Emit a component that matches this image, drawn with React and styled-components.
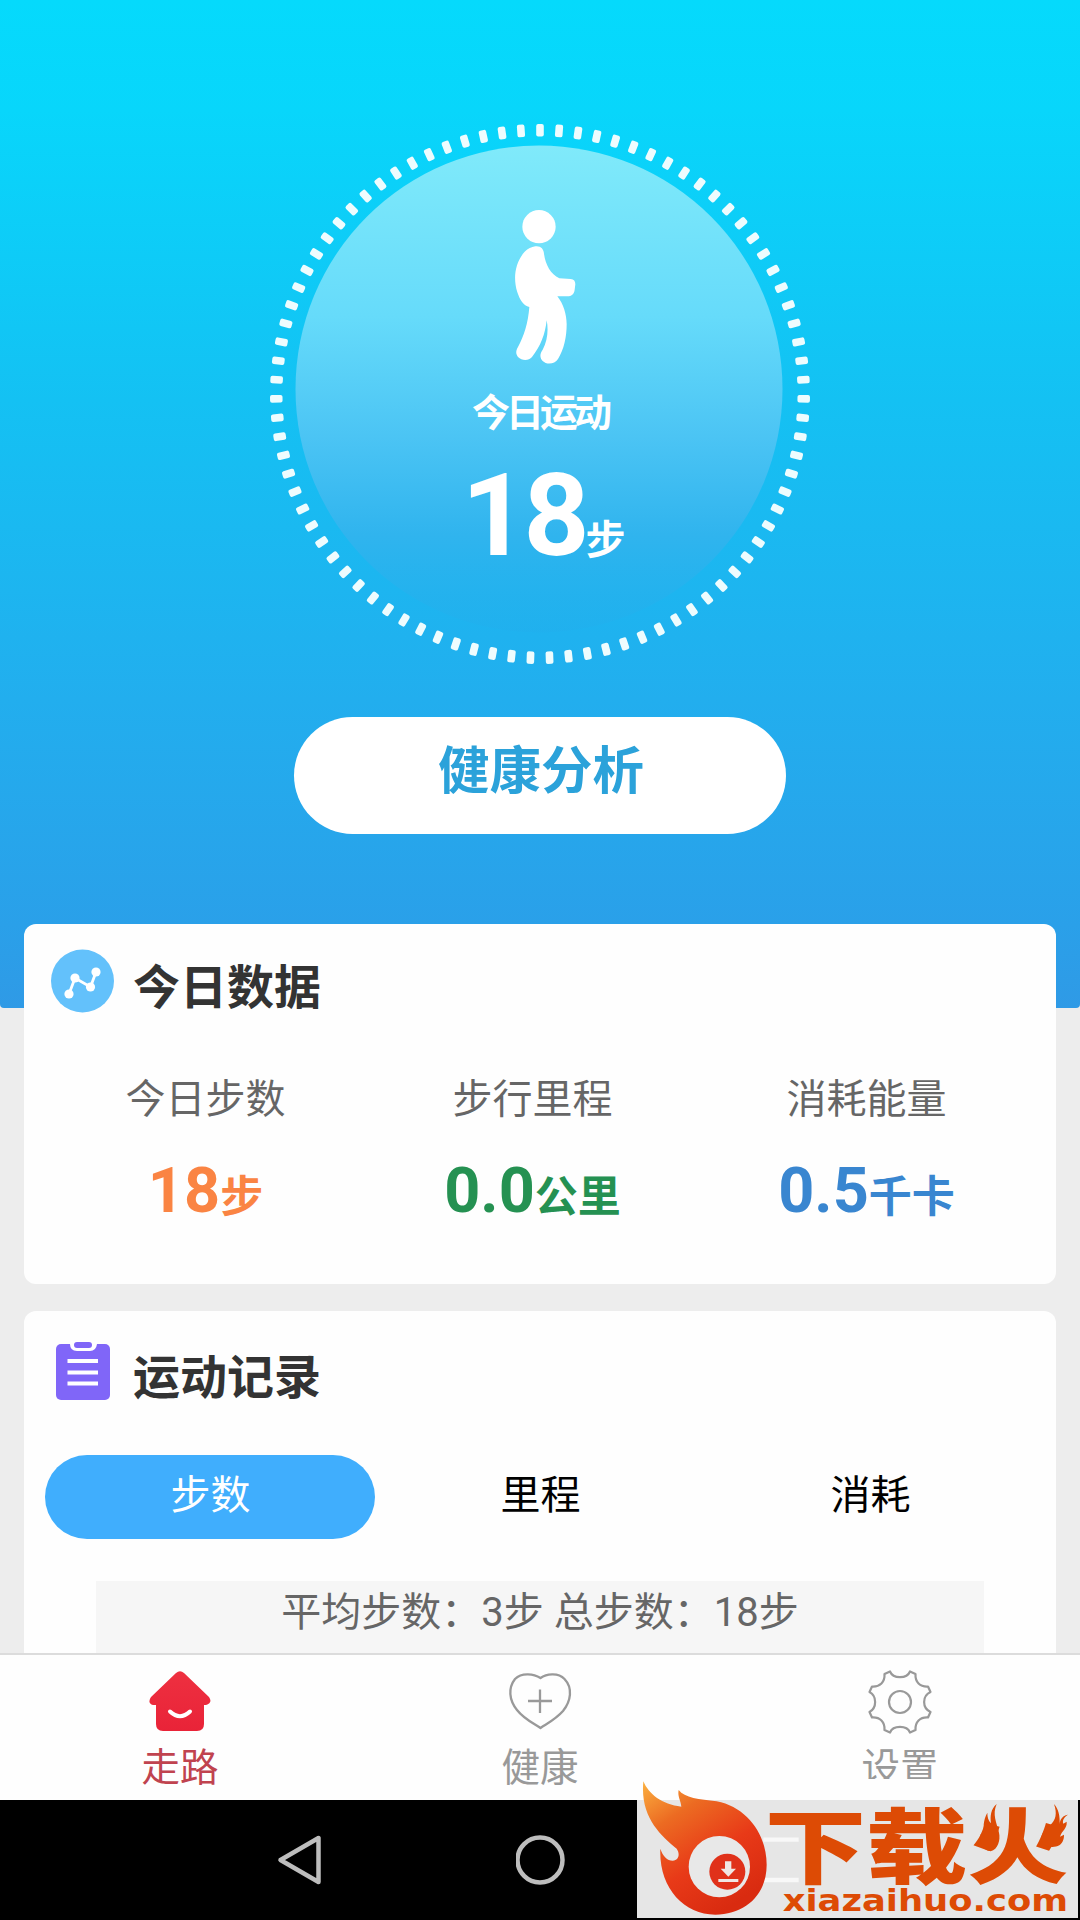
import styled, { createGlobalStyle } from "styled-components";

const GlobalStyle = createGlobalStyle`
    * { box-sizing: border-box; }
    body {
        margin: 0;
        background: #ededed;
        font-family: Roboto, "Noto Sans CJK SC", sans-serif;
    }
`

const Screen = styled.div`
    position: relative;
    width: 1080px;
    height: 1920px;
    overflow: hidden;
    display: flex;
    flex-direction: column;
    background: #ededed;
`

const Scroll = styled.main`
    height: 1653px;
    overflow: hidden;
    flex-shrink: 0;
`

const Hero = styled.section`
    height: 1008px;
    padding-top: 124px;
    display: flex;
    flex-direction: column;
    align-items: center;
    border-radius: 0 0 4px 4px;
    background: linear-gradient(180deg, #05dafc 0, #08d6fb 110px, #14c1f3 400px, #22aeee 700px, #2aa0e9 925px, #2f9ae6 1008px);
`

const Dial = styled.div`
    position: relative;
    width: 540px;
    height: 540px;
    display: flex;
    flex-direction: column;
    align-items: center;
    color: white;
`

const Ring = styled.svg`
    position: absolute;
    inset: 0;
`

const Walker = styled.svg`
    position: relative;
    margin: 85px 0 0 10px;
    flex-shrink: 0;
`

const DialLabel = styled.div`
    position: relative;
    margin-top: 18px;
    height: 60px;
    line-height: 60px;
    font-size: 38px;
    font-weight: 700;
    letter-spacing: -4px;
`

const DialValue = styled.div`
    position: relative;
    margin-top: 8px;
    height: 130px;
    line-height: 130px;
    padding-left: 7px;
    font-size: 115px;
    font-weight: 700;
    letter-spacing: -4px;
    white-space: nowrap;

    small {
        position: relative;
        top: -1px;
        font-size: 40px;
        letter-spacing: 0;
    }
`

const AnalyseButton = styled.button`
    margin-top: 53px;
    width: 492px;
    height: 117px;
    padding: 0 0 8px 2px;
    border: 0;
    border-radius: 59px;
    background: white;
    color: #2ba2da;
    font: 700 51.5px/100px Roboto, "Noto Sans CJK SC", sans-serif;
`

const Card = styled.section`
    width: 1032px;
    height: ${props => props.height}px;
    margin: ${props => props.top}px auto 0;
    position: relative;
    border-radius: 12px;
    background: #fefefe;
`

const CardHead = styled.header`
    height: 112px;
    padding: ${props => props.padTop}px 0 0 26px;
    display: flex;
    align-items: flex-start;
    gap: 19px;
`

const CardTitle = styled.h2`
    margin: ${props => props.shift}px 0 0;
    color: #333;
    font-size: 47px;
    line-height: 60px;
    font-weight: 700;
`

const Stats = styled.div`
    display: grid;
    grid-template-columns: 327px 327px 341px;
    padding: 34px 0 0 18px;
    text-align: center;
`

const StatLabel = styled.div`
    color: #666;
    font-size: 40px;
    line-height: 60px;
`

const StatValue = styled.div`
    margin-top: 21px;
    color: ${props => props.color};
    font-size: 63px;
    line-height: 80px;
    font-weight: 700;

    small {
        font-size: 43px;
    }
`

const Tabs = styled.div`
    display: flex;
    margin: 32px 0 0 21px;
`

const Tab = styled.button`
    width: 330px;
    height: 84px;
    padding: 0 0 3px 1px;
    border: 0;
    border-radius: 42px;
    background: ${props => props.active ? "#40aefd" : "transparent"};
    color: ${props => props.active ? "white" : "black"};
    font: 400 40px/60px Roboto, "Noto Sans CJK SC", sans-serif;
`

const Summary = styled.div`
    width: 888px;
    height: 160px;
    margin: 42px auto 0;
    padding-top: 2px;
    background: #f6f6f6;
    color: #666;
    font-size: 40px;
    line-height: 60px;
    text-align: center;
`

const TabBar = styled.nav`
    height: 147px;
    flex-shrink: 0;
    border-top: 2px solid #dcdcdc;
    background: #fefefe;
    display: grid;
    grid-template-columns: repeat(3, 1fr);
`

const NavItem = styled.div`
    display: flex;
    flex-direction: column;
    align-items: center;
    padding-top: 15px;
    color: ${props => props.color};

    span {
        margin-top: 5px;
        height: ${props => props.cut ? 40 : 58}px;
        overflow: hidden;
        font-size: 38.5px;
        line-height: 58px;
    }
`

const SystemBar = styled.div`
    height: 120px;
    background: black;
    display: flex;
    align-items: center;
    padding-left: 272px;
    gap: 190px;
`

const Watermark = styled.svg`
    position: absolute;
    left: 637px;
    top: 1780px;
`

const TICKS = 87

const stats = [
    { label: "今日步数", value: "18", unit: "步", color: "#fa8443" },
    { label: "步行里程", value: "0.0", unit: "公里", color: "#259152" },
    { label: "消耗能量", value: "0.5", unit: "千卡", color: "#3986d0" },
]

const DialRing = () => (
    <Ring width="540" height="540" viewBox="0 0 540 540">
        <defs>
            <linearGradient id="dial" x1="0" y1="0" x2="0" y2="1">
                <stop offset="0" stopColor="#80eafa" />
                <stop offset="0.35" stopColor="#66dbfa" />
                <stop offset="0.6" stopColor="#4bc4f4" />
                <stop offset="0.8" stopColor="#30b4ee" />
                <stop offset="1" stopColor="#22aeec" stopOpacity="0.4" />
            </linearGradient>
        </defs>
        <circle cx="269" cy="265" r="243.5" fill="url(#dial)" />
        {Array.from({ length: TICKS }, (_, i) => (
            <rect key={i} x="266.200" y="0" width="7.600" height="12.500" rx="2" fill="#eefcfe"
                transform={`rotate(${i * 360 / TICKS} 270 270)`} />
        ))}
    </Ring>
)

const WalkerIcon = () => (
    <Walker width="62" height="156" viewBox="164 56 186 468" fill="white">
        <circle cx="239" cy="109" r="50" />
        <path d="M228 168C244 166 253 176 254 190C258 222 274 252 300 264L334 266C344 267 348 272 348 282L346 298C344 312 336 318 324 318L294 318C312 340 322 372 322 402C322 440 314 478 296 506C286 522 262 524 250 512C240 500 242 490 250 478C264 452 268 420 262 390C258 430 244 468 218 500C208 512 188 512 176 500C168 490 170 480 176 470C194 436 206 400 210 350C192 346 182 330 174 306C160 262 168 216 196 184C206 174 216 170 228 168Z" />
    </Walker>
)

const TrendIcon = () => (
    <svg width="64" height="64" viewBox="0 0 64 64">
        <circle cx="32.500" cy="32" r="31.500" fill="#63c1fb" />
        <path d="M19 45L25 29L40.500 38L46 23" fill="none" stroke="white" strokeWidth="2.800" />
        <g fill="white">
            <circle cx="19" cy="45" r="4.600" />
            <circle cx="25" cy="29" r="4.600" />
            <circle cx="40.500" cy="38" r="4.600" />
            <circle cx="46" cy="23" r="4.600" />
        </g>
    </svg>
)

const ClipboardIcon = () => (
    <svg width="64" height="60" viewBox="0 0 64 60">
        <rect x="6" y="3" width="54" height="56" rx="5" fill="#8066f8" />
        <path d="M20 0H47V3Q46 10 40 10H27Q20 10 20 3Z" fill="white" />
        <rect x="24" y="1" width="18" height="6" rx="3" fill="#8066f8" />
        <path d="M17.500 20H48M17.500 31.500H48M17.500 42.500H48" stroke="white" strokeWidth="4" />
    </svg>
)

const HomeIcon = () => (
    <svg width="64" height="64" viewBox="0 0 64 64">
        <defs>
            <linearGradient id="home" x1="0" y1="0" x2="0" y2="1">
                <stop offset="0" stopColor="#ee3040" />
                <stop offset="1" stopColor="#e92338" />
            </linearGradient>
        </defs>
        <path d="M28 3Q32 -0.500 36 3L61 27Q65 33 58 35H56V54Q56 61 49 61H15Q8 61 8 54V35H5Q-1 33 3 27Z" fill="url(#home)" />
        <path d="M22 41.500Q32 51 42 41.500" fill="none" stroke="white" strokeWidth="4" strokeLinecap="round" />
    </svg>
)

const HeartIcon = () => (
    <svg width="64" height="64" viewBox="0 0 64 64" fill="none" stroke="#999" strokeWidth="2.300" strokeLinejoin="round">
        <path d="M32.500 8C38 4 50 2 56.500 9C65 18 63 31 55 41C48 49 40 53 32.500 58C25 53 16 49 9 40C1 30 0 18 7 9C14 2 26 4 32.500 8Z" />
        <path d="M32 19.500V43M20 31H44" />
    </svg>
)

const GearIcon = () => (
    <svg width="64" height="64" viewBox="0 0 64 64" fill="none" stroke="#999" strokeWidth="2.200" strokeLinejoin="round">
        {/* eight teeth with scooped gaps between them */}
        <path d="M22 1.500C25 9 39 9 42 1.500L47.500 4C47 12 52 17 60 16.500L62.500 22C54 26 54 38 62.500 42L60 47.500C52 47 47 52 47.500 60L42 62.500C39 55 25 55 22 62.500L16.500 60C17 52 12 47 4 47.500L1.500 42C9 38 9 26 1.500 22L4 16.500C12 17 17 12 16.500 4Z" />
        <circle cx="32" cy="32" r="11" />
    </svg>
)

// 下载火 site badge in the lower right corner
const SiteBadge = () => (
    <Watermark width="441" height="138" viewBox="51 420 1323 414">
        <defs>
            <linearGradient id="flame" x1="0" y1="0" x2="0.6" y2="1">
                <stop offset="0" stopColor="#fbb040" />
                <stop offset="0.3" stopColor="#ec6b22" />
                <stop offset="0.65" stopColor="#e83a18" />
                <stop offset="1" stopColor="#d92b10" />
            </linearGradient>
        </defs>
        <rect x="51" y="480" width="1323" height="354" fill="#e6e6e6" />
        <path d="M430 599H536M430 720H536" stroke="#f8f8f8" strokeWidth="13" />
        <path d="M70 424C86 462 126 494 184 500C182 480 172 470 176 450C194 474 238 478 290 484C382 502 440 584 440 674C440 764 376 824 286 824C190 824 116 742 121 626C128 648 142 662 158 662C178 660 180 640 170 626C120 584 60 530 70 424Z" fill="url(#flame)" />
        <circle cx="298" cy="680" r="92" fill="#e8e8e8" />
        <circle cx="322" cy="695" r="54" fill="#e0311a" />
        <path d="M315 664H334V686H348L325 710L302 686H315ZM295 717H355V726H295Z" fill="#f0e6e4" />
        <text transform="translate(434 711) scale(1 0.81)" fontFamily="Noto Sans CJK SC" fontWeight="900" fontSize="304" fill="#dd4b05">下载火</text>
        <g fill="#dd4b05">
            <path d="M1130 492C1112 508 1110 528 1113 550C1105 542 1102 532 1102 518C1090 540 1088 562 1095 592L1082 582C1078 612 1092 632 1112 634C1134 628 1142 600 1137 578C1130 548 1116 524 1130 492Z" />
            <path d="M1302 492C1312 520 1308 540 1290 556C1266 574 1258 594 1268 608C1278 622 1302 624 1318 616C1330 606 1332 596 1332 584L1320 590C1326 570 1342 566 1340 545L1330 551C1326 540 1334 530 1344 524C1330 526 1320 536 1319 552C1320 528 1316 508 1302 492Z" />
        </g>
        <text x="488" y="814" fontFamily="DejaVu Sans" fontWeight="700" fontSize="92" textLength="856" lengthAdjust="spacingAndGlyphs" fill="#dd4b05">xiazaihuo.com</text>
    </Watermark>
)

const App = () => (
    <>
        <GlobalStyle />
        <Screen>
            <Scroll>
                <Hero>
                    <Dial>
                        <DialRing />
                        <WalkerIcon />
                        <DialLabel>今日运动</DialLabel>
                        <DialValue>18<small>步</small></DialValue>
                    </Dial>
                    <AnalyseButton>健康分析</AnalyseButton>
                </Hero>
                <Card top={-84} height={360}>
                    <CardHead padTop={25}>
                        <TrendIcon />
                        <CardTitle shift={9}>今日数据</CardTitle>
                    </CardHead>
                    <Stats>
                        {stats.map(s => (
                            <div key={s.label}>
                                <StatLabel>{s.label}</StatLabel>
                                <StatValue color={s.color}>{s.value}<small>{s.unit}</small></StatValue>
                            </div>
                        ))}
                    </Stats>
                </Card>
                <Card top={27} height={420}>
                    <CardHead padTop={30}>
                        <ClipboardIcon />
                        <CardTitle shift={7}>运动记录</CardTitle>
                    </CardHead>
                    <Tabs>
                        <Tab active>步数</Tab>
                        <Tab>里程</Tab>
                        <Tab>消耗</Tab>
                    </Tabs>
                    <Summary>平均步数：3步 总步数：18步</Summary>
                </Card>
            </Scroll>
            <TabBar>
                <NavItem color="#c0434f"><HomeIcon /><span>走路</span></NavItem>
                <NavItem color="#999"><HeartIcon /><span>健康</span></NavItem>
                <NavItem color="#999" cut><GearIcon /><span>设置</span></NavItem>
            </TabBar>
            <SystemBar>
                <svg width="54" height="54" viewBox="0 0 54 54" fill="none" stroke="#bdbdbd" strokeWidth="4.500" strokeLinejoin="round">
                    <path d="M8.500 27L46.500 5V49Z" />
                </svg>
                <svg width="50" height="50" viewBox="0 0 50 50" fill="none" stroke="#bdbdbd" strokeWidth="4.500">
                    <circle cx="24" cy="25" r="22.500" />
                </svg>
            </SystemBar>
            <SiteBadge />
        </Screen>
    </>
)

export default App
